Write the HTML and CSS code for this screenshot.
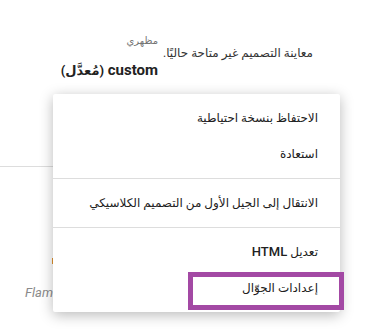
FILE: index.html
```html
<!DOCTYPE html>
<html lang="ar">
<head>
  <meta charset="utf-8">
  <link rel="stylesheet" href="styles.css">
</head>
<body>

<div class="page">

  <div class="theme-row" dir="rtl">
    <p class="preview-msg">معاينة التصميم غير متاحة حاليًا.</p>
    <div class="theme-info">
      <div class="theme-label">مظهري</div>
      <div class="theme-name">custom <span class="theme-mod">(مُعدَّل)</span></div>
    </div>
  </div>

  <div class="rule"></div>

  <div class="gallery">
    <div class="gallery-tag"></div>
    <div class="gallery-name">Flame</div>
  </div>

  <div class="menu" dir="rtl">
    <div class="menu-item">الاحتفاظ بنسخة احتياطية</div>
    <div class="menu-item">استعادة</div>
    <div class="menu-sep"></div>
    <div class="menu-item">الانتقال إلى الجيل الأول من التصميم الكلاسيكي</div>
    <div class="menu-sep"></div>
    <div class="menu-item">تعديل <span class="menu-latin">HTML</span></div>
    <div class="menu-item">إعدادات الجوّال</div>
    <div class="highlight"></div>
  </div>

</div>

</body>
</html>
```

FILE: styles.css
```css
  body {
    margin: 0;
    background: #ffffff;
    font-family: Roboto, Arial, "Liberation Sans", "DejaVu Sans", sans-serif;
    color: #212121;
  }

  .page {
    position: relative;
    width: 373px;
    height: 331px;
    overflow: hidden;
  }

  .theme-row {
    display: grid;
    grid-template-columns: 155px auto;
    padding: 33px 60px 0 0;
    height: 100px;
    box-sizing: border-box;
  }

  .preview-msg {
    margin: 11px 0 0 0;
    font-size: 12px;
    line-height: 18px;
    color: #333333;
  }

  .theme-label {
    font-size: 10px;
    line-height: 16px;
    color: #757575;
  }

  .theme-name {
    margin-top: 11px;
    font-size: 15px;
    line-height: 20px;
    font-weight: bold;
    color: #222222;
  }

  .theme-mod {
    font-size: 13px;
  }

  .rule {
    margin-top: 66px;
    width: 200px;
    height: 1px;
    background: #dddddd;
  }

  .gallery {
    padding-left: 25px;
  }

  .gallery-tag {
    margin: 91px 0 0 27px;
    width: 6px;
    height: 6px;
    background: #e0922f;
  }

  .gallery-name {
    margin-top: 21px;
    font-size: 13px;
    font-style: italic;
    color: #8a8a8a;
  }

  .menu {
    position: absolute;
    left: 53px;
    top: 94px;
    width: 287px;
    padding: 6px 0;
    background: #ffffff;
    border-radius: 2px;
    box-shadow: 0 3px 14px rgba(0, 0, 0, 0.28);
  }

  .menu-item {
    height: 36px;
    line-height: 36px;
    padding-right: 22px;
    font-size: 12px;
    color: #212121;
    white-space: nowrap;
  }

  .menu-latin {
    font-size: 13px;
    font-weight: 500;
  }

  .menu-sep {
    margin: 6px 0;
    height: 1px;
    background: #dddddd;
  }

  .highlight {
    position: absolute;
    left: 135px;
    top: 178px;
    width: 146px;
    height: 28px;
    border: 5px solid #a349a4;
  }
```
